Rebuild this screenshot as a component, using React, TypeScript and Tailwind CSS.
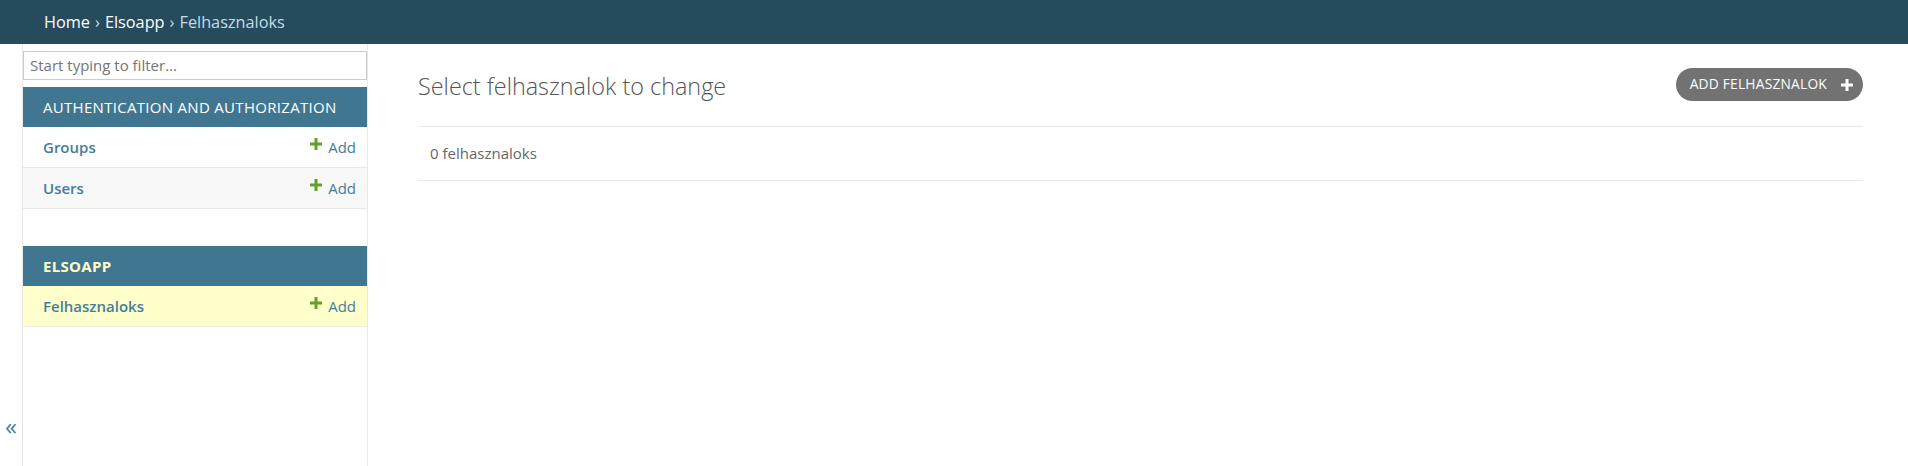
import React from "react";

const font = { fontFamily: '"Open Sans", "Noto Sans", sans-serif' };

function Plus({ className = "" }: { className?: string }) {
  return (
    <svg viewBox="0 0 12 12" className={className} aria-hidden>
      <path d="M4.5 0h3v4.5H12v3H7.5V12h-3V7.5H0v-3h4.5z" fill="currentColor" />
    </svg>
  );
}

function Row({ name, shaded, current }: { name: string; shaded?: boolean; current?: boolean }) {
  const bg = current ? "bg-[#ffffcc]" : shaded ? "bg-[#f8f8f8]" : "bg-white";
  return (
    <div className={`flex h-[41px] items-center justify-between border-b border-[#e8e8e8] pl-[20px] pr-[11px] ${bg}`}>
      <span className="text-[15px] font-semibold text-[#447e9b]">{name}</span>
      <span className="flex items-center text-[15px] text-[#447e9b]">
        <Plus className="mb-[7px] mr-[6px] h-[12px] w-[12px] text-[#5fa225]" />
        Add
      </span>
    </div>
  );
}

export default function App() {
  return (
    <div className="flex h-[466px] w-[1908px] flex-col overflow-hidden bg-white" style={font}>
      <div className="flex h-[44px] shrink-0 items-center bg-[#264b5d] px-[44px] text-[16.3px] text-[#c4dce8]">
        <span className="text-white">Home</span>
        <span className="mx-[5px]">›</span>
        <span className="text-white">Elsoapp</span>
        <span className="mx-[5px]">›</span>
        <span>Felhasznaloks</span>
      </div>
      <div className="flex min-h-0 flex-1">
        <div className="flex w-[23px] shrink-0 items-end justify-center border-r border-[#e8e8e8] pb-[28px]">
          <span className="text-[24px] leading-none text-[#447e9b]">«</span>
        </div>
        <div className="w-[345px] shrink-0 border-r border-[#e8e8e8] pt-[7px]">
          <div className="flex h-[29px] items-center border border-[#cccccc] px-[6px] text-[15px] text-[#757575]">
            Start typing to filter...
          </div>
          <div className="mt-[7px]">
            <div className="flex h-[40px] items-center bg-[#417690] pl-[20px] text-[15px] tracking-[0.3px] text-white">
              AUTHENTICATION AND AUTHORIZATION
            </div>
            <Row name="Groups" />
            <Row name="Users" shaded />
          </div>
          <div className="mt-[37px]">
            <div className="flex h-[40px] items-center bg-[#417690] pl-[20px] text-[15px] font-bold tracking-[0.3px] text-[#ffffcc]">
              ELSOAPP
            </div>
            <Row name="Felhasznaloks" current />
          </div>
        </div>
        <div className="min-w-0 flex-1 pl-[50px] pr-[45px] pt-[24px]">
          <div className="flex items-start justify-between">
            <h1 className="mt-[1px] text-[23.4px] font-light text-[#555555]">Select felhasznalok to change</h1>
            <div className="flex h-[33px] items-center rounded-full bg-[#727272] pl-[14px] pr-[10px] text-[13.8px] tracking-[0.2px] text-white">
              ADD FELHASZNALOK
              <Plus className="ml-[14px] h-[12px] w-[12px] text-white" />
            </div>
          </div>
          <div className="mt-[22px] border-t border-[#e8e8e8]">
            <div className="flex h-[54px] items-center border-b border-[#e8e8e8] pl-[12px] text-[15px] text-[#666666]">
              0 felhasznaloks
            </div>
          </div>
        </div>
      </div>
    </div>
  );
}
